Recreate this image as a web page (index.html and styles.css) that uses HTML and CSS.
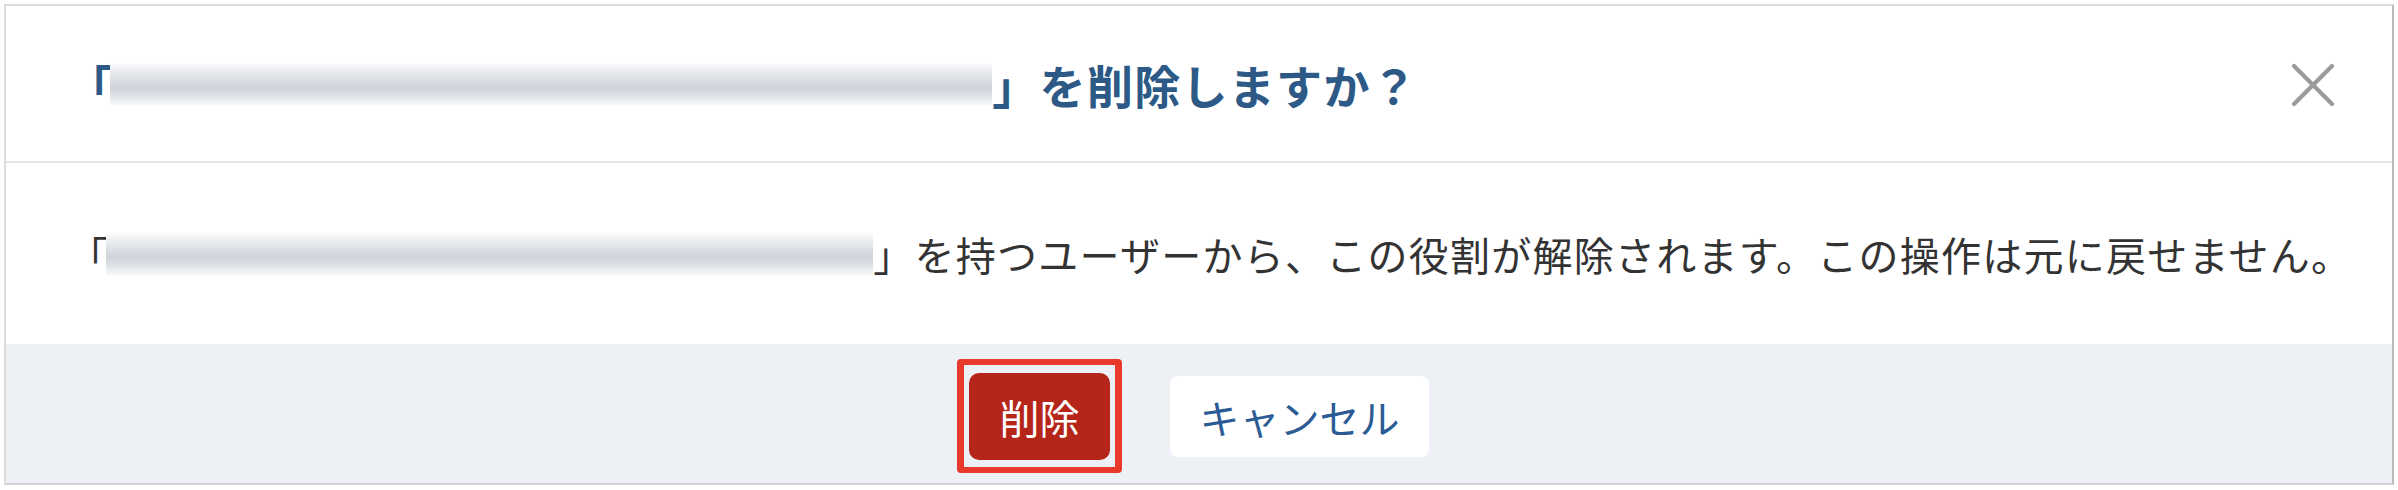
FILE: index.html
```html
<!DOCTYPE html>
<html lang="ja">
<head>
<meta charset="utf-8">
<title>役割の削除</title>
<link rel="stylesheet" href="styles.css">
</head>
<body>
<div class="dialog">
  <div class="dialog-header">
    <h2 class="dialog-title">「<span class="redact redact-title"></span>」を削除しますか？</h2>
    <button class="close-btn" aria-label="閉じる">
      <svg width="44" height="44" viewBox="0 0 44 44"><path d="M3 3 L41 41 M41 3 L3 41" stroke="#9a9a9a" stroke-width="4.2" stroke-linecap="round" fill="none"/></svg>
    </button>
  </div>
  <div class="dialog-body">
    <p class="message">「<span class="redact redact-body"></span>」を持つユーザーから、この役割が解除されます。この操作は元に戻せません。</p>
  </div>
  <div class="dialog-footer">
    <span class="highlight"><button class="btn btn-danger">削除</button></span>
    <button class="btn btn-cancel">キャンセル</button>
  </div>
</div>
</body>
</html>
```
FILE: styles.css
```css
html, body {
  margin: 0;
  padding: 0;
  background: #ffffff;
}

body {
  font-family: "Noto Sans CJK JP", "Noto Sans", sans-serif;
}

.dialog {
  margin: 4px;
  border: 2px solid #dcdcdc;
  border-right-color: #b9b9b9;
  border-bottom-color: #d2d2d2;
  background: #ffffff;
  display: flex;
  flex-direction: column;
}

.dialog-header {
  height: 155px;
  border-bottom: 2px solid #e6e6e6;
  display: flex;
  align-items: center;
  justify-content: space-between;
  padding: 0 57px 0 61px;
}

.dialog-title {
  margin: 0;
  font-size: 46px;
  line-height: 1;
  letter-spacing: 1.3px;
  font-weight: 700;
  color: #2c5985;
  display: flex;
  align-items: center;
  white-space: nowrap;
}

.redact {
  display: inline-block;
  height: 44px;
  background: linear-gradient(to bottom, #ffffff 0%, #eef0f3 16%, #dde0e5 38%, #cfd3da 58%, #e2e5e9 80%, #fbfbfc 100%);
}

.redact-title {
  width: 882px;
  margin-left: -4px;
}

.redact-body {
  width: 767px;
  margin-left: -3px;
}

.close-btn {
  border: none;
  background: transparent;
  padding: 0;
  width: 44px;
  height: 44px;
  display: flex;
  align-items: center;
  justify-content: center;
  margin-top: 2px;
}

.dialog-body {
  height: 181px;
  display: flex;
  align-items: center;
  padding: 0 60px 0 62px;
}

.message {
  margin: 0;
  font-size: 40px;
  line-height: 1;
  letter-spacing: 1.25px;
  color: #333333;
  display: flex;
  align-items: center;
  white-space: nowrap;
}

.dialog-footer {
  height: 139px;
  box-sizing: border-box;
  padding-top: 6px;
  background: #edf1f5;
  display: flex;
  align-items: center;
  justify-content: center;
  gap: 60px;
}

.highlight {
  position: relative;
  display: inline-flex;
}

.highlight::after {
  content: "";
  position: absolute;
  top: -14px;
  bottom: -13px;
  left: -12px;
  right: -12px;
  border-style: solid;
  border-color: #e8392b;
  border-width: 6px 7px;
  border-radius: 4px;
}

.btn {
  font-family: "Noto Sans CJK JP", "Noto Sans", sans-serif;
  font-size: 40px;
  line-height: 1;
  border: none;
  padding: 0;
  display: inline-flex;
  align-items: center;
  justify-content: center;
}

.btn-danger {
  width: 141px;
  height: 87px;
  background: #b6251a;
  color: #ffffff;
  border-radius: 10px;
}

.btn-cancel {
  width: 259px;
  height: 81px;
  background: #ffffff;
  color: #2b5b94;
  border-radius: 8px;
}
```
